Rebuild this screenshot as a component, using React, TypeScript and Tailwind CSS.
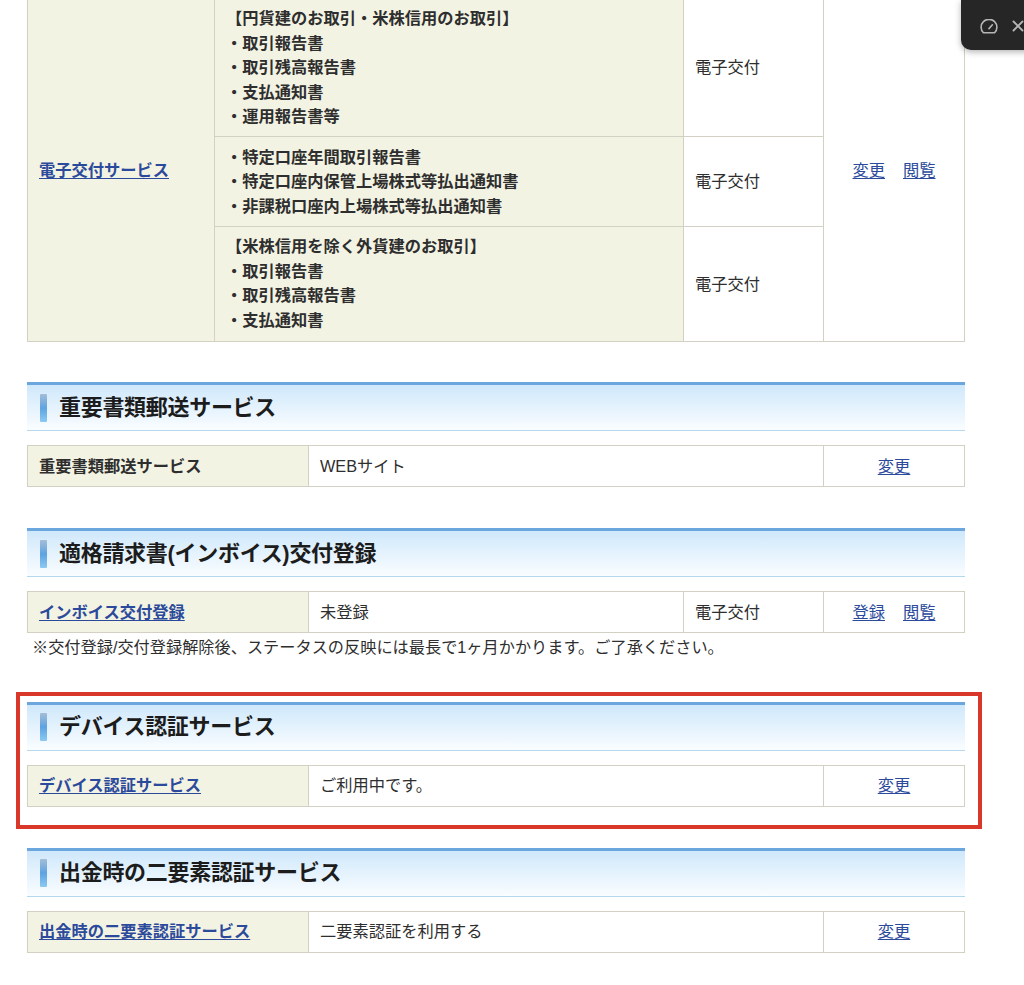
import { X } from "lucide-react";

const cell = "border border-[#d3d1c3] px-[11px] align-middle";
const head = cell + " bg-[#f3f3e3] font-bold";
const link = "text-[#2b4a9b] underline underline-offset-2";

function SectionTitle({ title }: { title: string }) {
  return (
    <div className="flex h-[49px] items-center border-b border-[#b5d8ef] border-t-[3px] border-t-[#6ba6de] bg-gradient-to-b from-[#cfe8fb] to-[#fafdff] pl-[13px]">
      <span className="h-[28px] w-[7px] rounded-[1px] bg-gradient-to-b from-[#a3bdd6] via-[#5ea3e0] to-[#8ccaf2]" />
      <h2 className="ml-[12px] pt-[1px] text-[22px] font-bold tracking-[-0.3px] text-[#1c1c1c]">{title}</h2>
    </div>
  );
}

function Row({ label, value, action, linked }: { label: string; value: string; action: string; linked?: boolean }) {
  return (
    <table className="mt-[14px] w-[938px] table-fixed border-collapse">
      <colgroup>
        <col className="w-[281px]" />
        <col />
        <col className="w-[141px]" />
      </colgroup>
      <tbody>
        <tr className="h-[41px]">
          <td className={head}>{linked ? <a className={link}>{label}</a> : label}</td>
          <td className={cell}>{value}</td>
          <td className={cell + " text-center"}>
            <a className={link}>{action}</a>
          </td>
        </tr>
      </tbody>
    </table>
  );
}

export default function App() {
  return (
    <div className="relative h-[985px] w-[1024px] overflow-hidden bg-white pl-[27px] font-['Liberation_Sans','Noto_Sans_CJK_JP',sans-serif] text-[16.25px] leading-[24.5px] text-[#2e2e2e]">
      {/* top table, cut off by the scroll position */}
      <table className="-mt-[2px] w-[937px] table-fixed border-collapse">
        <colgroup>
          <col className="w-[187px]" />
          <col className="w-[469px]" />
          <col className="w-[140px]" />
          <col className="w-[141px]" />
        </colgroup>
        <tbody>
          <tr>
            <td rowSpan={3} className={head}>
              <a className={link}>電子交付サービス</a>
            </td>
            <td className={head + " pb-[7px] pt-[7px]"}>
              <p>【円貨建のお取引・米株信用のお取引】</p>
              <p>・取引報告書</p>
              <p>・取引残高報告書</p>
              <p>・支払通知書</p>
              <p>・運用報告書等</p>
            </td>
            <td className={cell}>電子交付</td>
            <td rowSpan={3} className={cell + " text-center"}>
              <a className={link}>変更</a>
              <a className={link + " ml-[18px]"}>閲覧</a>
            </td>
          </tr>
          <tr>
            <td className={head + " py-2"}>
              <p>・特定口座年間取引報告書</p>
              <p>・特定口座内保管上場株式等払出通知書</p>
              <p>・非課税口座内上場株式等払出通知書</p>
            </td>
            <td className={cell}>電子交付</td>
          </tr>
          <tr>
            <td className={head + " pb-[9px] pt-[7px]"}>
              <p>【米株信用を除く外貨建のお取引】</p>
              <p>・取引報告書</p>
              <p>・取引残高報告書</p>
              <p>・支払通知書</p>
            </td>
            <td className={cell}>電子交付</td>
          </tr>
        </tbody>
      </table>

      <section className="mt-[40px] w-[938px]">
        <SectionTitle title="重要書類郵送サービス" />
        <Row label="重要書類郵送サービス" value="WEBサイト" action="変更" />
      </section>

      <section className="mt-[41px] w-[938px]">
        <SectionTitle title="適格請求書(インボイス)交付登録" />
        <table className="mt-[14px] w-[937px] table-fixed border-collapse">
          <colgroup>
            <col className="w-[281px]" />
            <col className="w-[375px]" />
            <col className="w-[140px]" />
            <col className="w-[141px]" />
          </colgroup>
          <tbody>
            <tr className="h-[41px]">
              <td className={head}>
                <a className={link}>インボイス交付登録</a>
              </td>
              <td className={cell}>未登録</td>
              <td className={cell}>電子交付</td>
              <td className={cell + " text-center"}>
                <a className={link}>登録</a>
                <a className={link + " ml-[18px]"}>閲覧</a>
              </td>
            </tr>
          </tbody>
        </table>
        <p className="mt-[2px] pl-[5px] text-[16.2px]">※交付登録/交付登録解除後、ステータスの反映には最長で1ヶ月かかります。ご了承ください。</p>
      </section>

      <section className="relative mt-[42px] w-[938px]">
        <SectionTitle title="デバイス認証サービス" />
        <Row label="デバイス認証サービス" value="ご利用中です。" action="変更" linked />
        {/* red annotation box */}
        <div className="absolute -left-[11px] -top-[10px] h-[137px] w-[966px] border-4 border-[#d9372a]" />
      </section>

      <section className="mt-[41px] w-[938px]">
        <SectionTitle title="出金時の二要素認証サービス" />
        <Row label="出金時の二要素認証サービス" value="二要素認証を利用する" action="変更" linked />
      </section>

      {/* floating dark toolbar */}
      <div className="absolute left-[961px] top-0 flex h-[50px] w-[80px] items-center gap-[11px] rounded-bl-[10px] bg-[#262626] pl-[19px] pt-[2px] text-[#b5b5b5] shadow-[0_2px_6px_rgba(0,0,0,0.3)]">
        <svg viewBox="0 0 18 15" className="h-[15px] w-[18px] shrink-0" fill="none" stroke="currentColor" strokeWidth="1.6" strokeLinecap="round" strokeLinejoin="round">
          <path d="M3.4 13.8h11.2a7.9 7.9 0 1 0-11.2 0z" />
          <path d="M9 9.6l3.4-3.8" />
        </svg>
        <X className="size-[18px] shrink-0" strokeWidth={2.5} />
      </div>
    </div>
  );
}
